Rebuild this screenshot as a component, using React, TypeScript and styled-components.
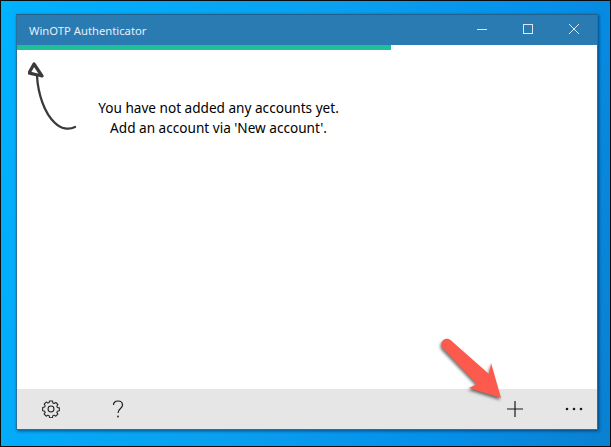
import React from "react";
import styled, { createGlobalStyle } from "styled-components";

const Global = createGlobalStyle`
  html, body { margin: 0; padding: 0; width: 611px; height: 447px; overflow: hidden; }
  #root { width: 611px; height: 447px; }
`;

const Desktop = styled.div`
  box-sizing: border-box;
  position: relative;
  width: 611px;
  height: 447px;
  padding: 13px 12px 16px 15px;
  border: 1px solid #0b0b0b;
  background: linear-gradient(105deg, #00b2ff 0%, #0aa0f0 45%, #0590ea 75%, #0a80d0 100%);
  font-family: "Noto Sans", sans-serif;
`;

const Window = styled.div`
  box-sizing: border-box;
  display: flex;
  flex-direction: column;
  height: 100%;
  background: #fff;
  border: 1px solid #2b6f9f;
  border-top-color: #22618c;
  box-shadow: 1px 1px 3px rgba(0, 30, 70, 0.65);
`;

const TitleBar = styled.div`
  display: flex;
  align-items: center;
  justify-content: space-between;
  height: 30px;
  padding-left: 12px;
  background: #2b7bb3;
`;

const Title = styled.span`
  color: #e4eff7;
  font-size: 11.25px;
`;

const Controls = styled.div`
  display: flex;
  height: 100%;
`;

const ControlButton = styled.div`
  display: flex;
  align-items: center;
  justify-content: center;
  width: 46px;
  height: 100%;
`;

const ProgressTrack = styled.div`
  height: 5px;
  background: #fff;
`;

const ProgressFill = styled.div`
  width: 374px;
  height: 100%;
  background: #1fbf9a;
`;

const Content = styled.div`
  flex: 1;
  display: flex;
  align-items: flex-start;
  padding: 11px 0 0 11px;
`;

const Scribble = styled.svg`
  flex: none;
  width: 52px;
  height: 72px;
`;

const Message = styled.p`
  margin: 37px 0 0 17px;
  width: 243px;
  color: #000;
  font-family: "Noto Sans", sans-serif;
  font-size: 13.6px;
  line-height: 20px;
  text-align: center;
  white-space: nowrap;
`;

const BottomBar = styled.div`
  display: flex;
  align-items: center;
  height: 40px;
  background: #e6e6e6;
`;

const BarButton = styled.div<{ $width: number }>`
  display: flex;
  align-items: center;
  justify-content: center;
  flex: none;
  width: ${(p) => p.$width}px;
  height: 100%;
`;

const Spacer = styled.div`
  flex: 1;
`;

const Pointer = styled.svg`
  position: absolute;
  left: 435px;
  top: 333px;
  width: 70px;
  height: 72px;
  overflow: visible;
  filter: drop-shadow(-1px 2px 1.5px rgba(0, 0, 0, 0.55));
`;

const gearPath =
  "M8.2 1.2h3.6l.5 2.4 1.5.7 2.1-1.3 2.5 2.5-1.3 2.1.7 1.5 2.4.5v3.6l-2.4.5-.7 1.5 1.3 2.1-2.5 2.5-2.1-1.3-1.5.7-.5 2.4H8.2l-.5-2.4-1.5-.7-2.1 1.3-2.5-2.5 1.3-2.1-.7-1.5-2.4-.5V9.1l2.4-.5.7-1.5-1.3-2.1 2.5-2.5 2.1 1.3 1.5-.7z";

export default function App() {
  return (
    <Desktop>
      <Global />
      <Window>
        <TitleBar>
          <Title>WinOTP Authenticator</Title>
          <Controls>
            <ControlButton>
              <svg width="12" height="12" viewBox="0 0 12 12">
                <path d="M1 5.5h10" stroke="#dbe8f2" strokeWidth="1" />
              </svg>
            </ControlButton>
            <ControlButton>
              <svg width="12" height="12" viewBox="0 0 12 12">
                <rect x="1.5" y="0.5" width="9" height="9" fill="none" stroke="#dbe8f2" strokeWidth="1" />
              </svg>
            </ControlButton>
            <ControlButton>
              <svg width="12" height="12" viewBox="0 0 12 12">
                <path d="M1 0l10 10M11 0L1 10" stroke="#dbe8f2" strokeWidth="1" />
              </svg>
            </ControlButton>
          </Controls>
        </TitleBar>
        <ProgressTrack>
          <ProgressFill />
        </ProgressTrack>
        <Content>
          <Scribble viewBox="0 0 52 72" fill="none">
            <path d="M1 12 L6 3 L14 15 C10 14 5 13 1 12 Z" fill="#fff" stroke="#3a3a3a" strokeWidth="3.2" strokeLinejoin="round" />
            <path
              d="M9 15 C10 32 16 52 27 62 C33 68 41 69 47 66"
              stroke="#3a3a3a"
              strokeWidth="2.3"
              strokeLinecap="round"
            />
          </Scribble>
          <Message>
            You have not added any accounts yet.
            <br />
            Add an account via 'New account'.
          </Message>
        </Content>
        <BottomBar>
          <BarButton $width={68}>
            <svg width="18" height="18" viewBox="-1 0 22 22" fill="none">
              <path d={gearPath} stroke="#222" strokeWidth="1.3" strokeLinejoin="round" />
              <circle cx="10" cy="11" r="3.6" stroke="#222" strokeWidth="1.3" />
            </svg>
          </BarButton>
          <BarButton $width={66}>
            <svg width="12" height="18" viewBox="0 0 12 18" fill="none">
              <path d="M1.5 5 C1.5 2.5 3.5 1 6 1 C8.7 1 10.5 2.8 10.5 5 C10.5 8.5 6 8.5 6 13" stroke="#1f1f1f" strokeWidth="1.2" />
              <circle cx="6" cy="16.5" r="0.9" fill="#1f1f1f" />
            </svg>
          </BarButton>
          <Spacer />
          <BarButton $width={70}>
            <svg width="18" height="18" viewBox="0 0 18 18">
              <path d="M9 1v16M1 9h16" stroke="#1a1a1a" strokeWidth="1.2" />
            </svg>
          </BarButton>
          <BarButton $width={47}>
            <svg width="18" height="4" viewBox="0 0 18 4" fill="#1a1a1a">
              <circle cx="2" cy="2" r="1.3" />
              <circle cx="9" cy="2" r="1.3" />
              <circle cx="16" cy="2" r="1.3" />
            </svg>
          </BarButton>
        </BottomBar>
      </Window>
      <Pointer viewBox="0 0 70 72">
        <path
          d="M15 6.5 L53 40 L55 29 L65 64 L33 54 L41 50 L6.5 14 C4.5 11 5 8 7.5 6 C10 4 13 4.5 15 6.5 Z"
          fill="#fb5a4c"
        />
      </Pointer>
    </Desktop>
  );
}
